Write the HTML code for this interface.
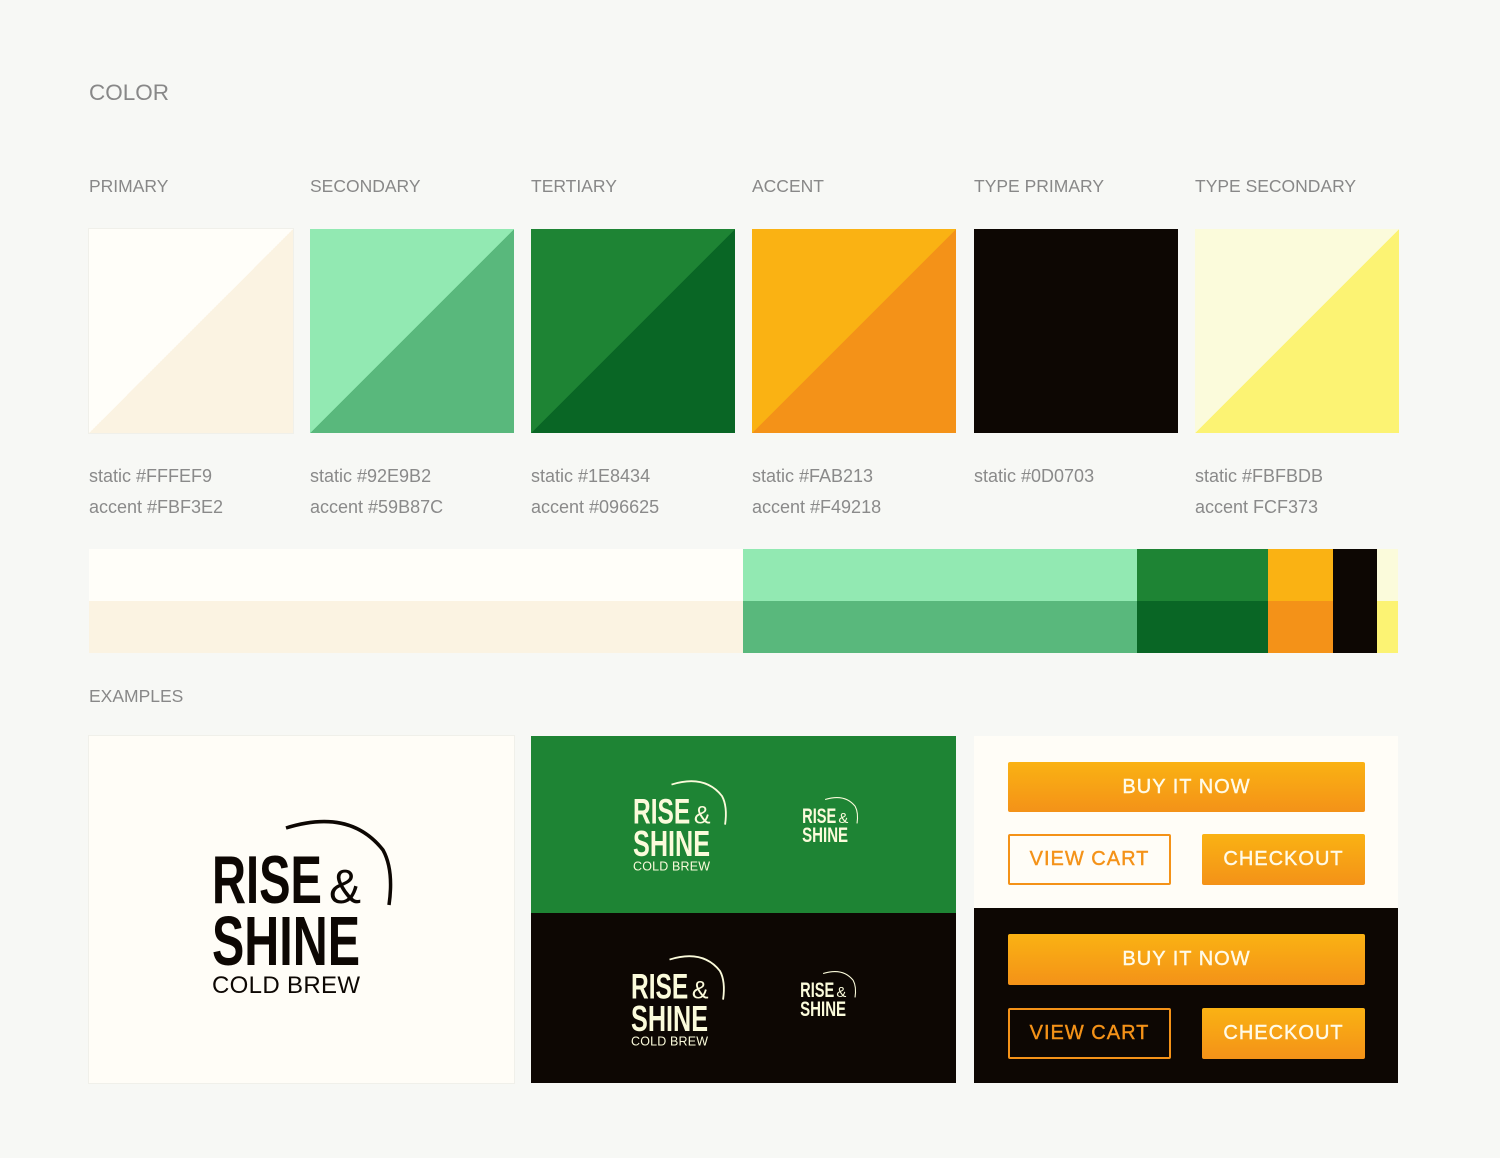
<!DOCTYPE html>
<html><head><meta charset="utf-8"><style>
*{margin:0;padding:0;box-sizing:border-box}
body{width:1500px;height:1158px;background:#f7f8f5;position:relative;overflow:hidden;font-family:"Liberation Sans",sans-serif;color:#888}
.a{position:absolute}
.h{font-size:17.5px;color:#888;top:176px}
.sw{position:absolute;top:229px;width:204px;height:204px}
.hex{position:absolute;top:461px;font-size:18px;line-height:31px;color:#8a8a8a}
.btn{position:absolute;display:flex;align-items:center;justify-content:center;font-size:20px;letter-spacing:1px;color:#fffbe8;background:linear-gradient(#fab213,#f49218);border-radius:2px;-webkit-text-stroke:0.4px currentColor}
.out{background:transparent;border:2px solid #f49218;color:#f49218}
</style></head><body>
<div class="a" style="left:89px;top:80px;font-size:22.5px;color:#888">COLOR</div>
<div class="a h" style="left:89px">PRIMARY</div>
<div class="a h" style="left:310px">SECONDARY</div>
<div class="a h" style="left:531px">TERTIARY</div>
<div class="a h" style="left:752px">ACCENT</div>
<div class="a h" style="left:974px">TYPE PRIMARY</div>
<div class="a h" style="left:1195px">TYPE SECONDARY</div>

<div class="sw" style="left:89px;background:linear-gradient(to bottom right,#fffef9 50%,#fbf3e2 50%);box-shadow:0 0 0 1px #f0f0ea"></div>
<div class="sw" style="left:310px;background:linear-gradient(to bottom right,#92e9b2 50%,#59b87c 50%)"></div>
<div class="sw" style="left:531px;background:linear-gradient(to bottom right,#1e8434 50%,#096625 50%)"></div>
<div class="sw" style="left:752px;background:linear-gradient(to bottom right,#fab213 50%,#f49218 50%)"></div>
<div class="sw" style="left:974px;background:#0d0703"></div>
<div class="sw" style="left:1195px;background:linear-gradient(to bottom right,#fbfbdb 50%,#fcf373 50%)"></div>

<div class="hex" style="left:89px">static #FFFEF9<br>accent #FBF3E2</div>
<div class="hex" style="left:310px">static #92E9B2<br>accent #59B87C</div>
<div class="hex" style="left:531px">static #1E8434<br>accent #096625</div>
<div class="hex" style="left:752px">static #FAB213<br>accent #F49218</div>
<div class="hex" style="left:974px">static #0D0703</div>
<div class="hex" style="left:1195px">static #FBFBDB<br>accent FCF373</div>

<div class="a" style="left:89px;top:549px;width:654px;height:52px;background:#fffef9"></div>
<div class="a" style="left:89px;top:601px;width:654px;height:52px;background:#fbf3e2"></div>
<div class="a" style="left:743px;top:549px;width:394px;height:52px;background:#92e9b2"></div>
<div class="a" style="left:743px;top:601px;width:394px;height:52px;background:#59b87c"></div>
<div class="a" style="left:1137px;top:549px;width:131px;height:52px;background:#1e8434"></div>
<div class="a" style="left:1137px;top:601px;width:131px;height:52px;background:#096625"></div>
<div class="a" style="left:1268px;top:549px;width:65px;height:52px;background:#fab213"></div>
<div class="a" style="left:1268px;top:601px;width:65px;height:52px;background:#f49218"></div>
<div class="a" style="left:1333px;top:549px;width:44px;height:104px;background:#0d0703"></div>
<div class="a" style="left:1377px;top:549px;width:21px;height:52px;background:#fbfbdb"></div>
<div class="a" style="left:1377px;top:601px;width:21px;height:52px;background:#fcf373"></div>

<div class="a" style="left:89px;top:686px;font-size:17.5px">EXAMPLES</div>

<div class="a" style="left:89px;top:736px;width:425px;height:347px;background:#fffdf7;box-shadow:0 0 0 1px #f0f0ea"></div>
<div class="a" style="left:531px;top:736px;width:425px;height:177px;background:#1e8434"></div>
<div class="a" style="left:531px;top:913px;width:425px;height:170px;background:#0d0703"></div>
<div class="a" style="left:974px;top:736px;width:424px;height:172px;background:#fffdf7"></div>
<div class="a" style="left:974px;top:908px;width:424px;height:175px;background:#0d0703"></div>

<svg class="a" style="left:0;top:0" width="1500" height="1158">
<defs>
<g id="lg">
<path d="M286 828 Q350 808 383 850 Q394 870 389 905" fill="none" stroke-width="3.5"/>
<text x="212" y="903" font-family="Liberation Sans Narrow,Liberation Sans,sans-serif" font-weight="bold" font-size="68" textLength="110" lengthAdjust="spacingAndGlyphs" stroke="none">RISE</text>
<text x="329" y="903" font-family="Liberation Sans,sans-serif" font-weight="normal" font-size="48" stroke="none">&amp;</text>
<text x="212" y="965" font-family="Liberation Sans Narrow,Liberation Sans,sans-serif" font-weight="bold" font-size="70" textLength="148" lengthAdjust="spacingAndGlyphs" stroke="none">SHINE</text>
</g>
<g id="cb"><text x="212" y="993" font-family="Liberation Sans,sans-serif" font-size="24" textLength="148" lengthAdjust="spacing" stroke="none">COLD BREW</text></g>
</defs>
<g fill="#0d0703" stroke="#0d0703"><use href="#lg"/><use href="#cb"/></g>
<g fill="#fbfbdb" stroke="#fbfbdb" transform="translate(629.4 777.8) scale(0.52) translate(-205 -815)"><use href="#lg"/><use href="#cb"/></g>
<g fill="#fbfbdb" stroke="#fbfbdb" transform="translate(800 795.5) scale(0.31) translate(-205 -815)"><use href="#lg"/></g>
<g fill="#fbfbdb" stroke="#fbfbdb" transform="translate(627.4 952.8) scale(0.52) translate(-205 -815)"><use href="#lg"/><use href="#cb"/></g>
<g fill="#fbfbdb" stroke="#fbfbdb" transform="translate(798 969.5) scale(0.31) translate(-205 -815)"><use href="#lg"/></g>
</svg>

<div class="btn" style="left:1008px;top:762px;width:357px;height:50px">BUY IT NOW</div>
<div class="btn out" style="left:1008px;top:834px;width:163px;height:51px">VIEW CART</div>
<div class="btn" style="left:1202px;top:834px;width:163px;height:51px">CHECKOUT</div>
<div class="btn" style="left:1008px;top:934px;width:357px;height:51px">BUY IT NOW</div>
<div class="btn out" style="left:1008px;top:1008px;width:163px;height:51px">VIEW CART</div>
<div class="btn" style="left:1202px;top:1008px;width:163px;height:51px">CHECKOUT</div>
</body></html>
